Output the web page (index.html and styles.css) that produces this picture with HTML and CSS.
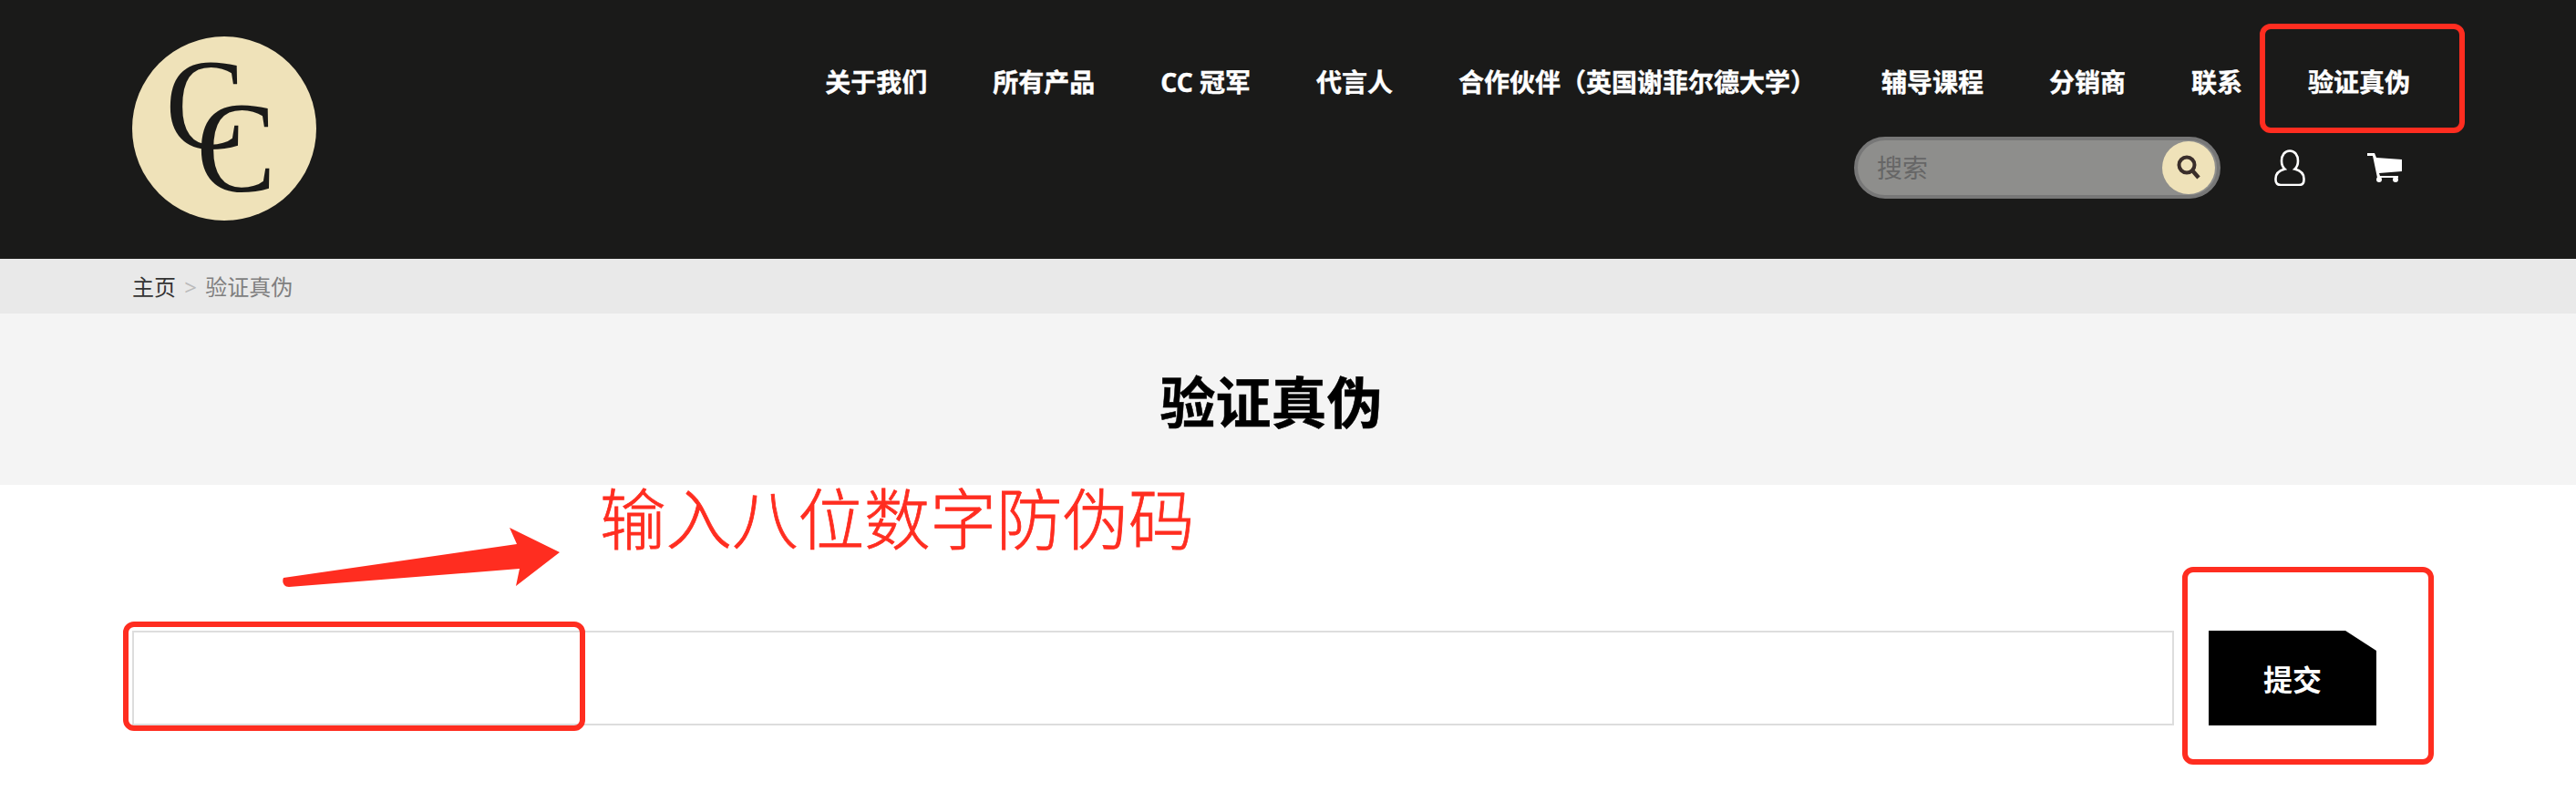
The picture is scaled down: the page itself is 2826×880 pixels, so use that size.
FILE: index.html
```html
<!DOCTYPE html>
<html lang="zh">
<head>
    <meta charset="UTF-8">
    <title>验证真伪</title>
    <link rel="stylesheet" href="styles.css">
</head>
<body>
    <header class="site_header">
        <a class="logo" href="#">
            <svg viewBox="0 0 202 202" width="202" height="202">
                <circle cx="101" cy="101" r="101" fill="#efe2b9"/>
                <text class="logo_c" transform="translate(36.500 123) scale(.92 1)">C</text>
                <text class="logo_c" transform="translate(70.500 170) scale(.92 1)">C</text>
            </svg>
        </a>
        <div class="header_right">
            <nav class="main_nav">
                <a href="#">关于我们</a>
                <a href="#">所有产品</a>
                <a href="#">CC 冠军</a>
                <a href="#">代言人</a>
                <a href="#">合作伙伴（英国谢菲尔德大学）</a>
                <a href="#">辅导课程</a>
                <a href="#">分销商</a>
                <a href="#">联系</a>
                <a href="#">验证真伪</a>
            </nav>
            <div class="tools">
                <div class="search">
                    <input type="text" placeholder="搜索">
                    <button class="search_btn">
                        <svg viewBox="0 0 30 30" width="30" height="30">
                            <circle cx="13" cy="12" r="8.500" fill="none" stroke="#3a2e2a" stroke-width="4"/>
                            <path d="M19 18l7 8" fill="none" stroke="#3a2e2a" stroke-width="4.500"/>
                        </svg>
                    </button>
                </div>
                <a class="user_icon" href="#">
                    <svg viewBox="0 0 34 40" width="34" height="40">
                        <path d="M11.500 21.500C9.200 19.500 8 16.500 8 12.500 8 6 11.500 1.500 17 1.500S26 6 26 12.500c0 4-1.200 7-3.500 9 5.800 1.500 10 5 10 10.500v1.500c0 3.300-2 5.500-5.500 5.500H7c-3.500 0-5.500-2.200-5.500-5.500V32c0-5.500 4.200-9 10-10.500z" fill="none" stroke="#fff" stroke-width="2.600"/>
                    </svg>
                </a>
                <a class="cart_icon" href="#">
                    <svg viewBox="0 0 38 32" width="38" height="32">
                        <path d="M0 0h8l2 5 28 2v13L13 22l1 3h20v2H11L6 3H0z" fill="#fff"/>
                        <circle cx="13" cy="29" r="3" fill="#fff"/>
                        <circle cx="31" cy="29" r="3" fill="#fff"/>
                    </svg>
                </a>
            </div>
        </div>
    </header>

    <div class="breadcrumb">
        <a href="#">主页</a> <span class="sep">&gt;</span> <span class="current">验证真伪</span>
    </div>

    <div class="title_band">
        <h1>验证真伪</h1>
    </div>

    <main class="verify_form">
        <input class="code_input" type="text">
        <button class="submit_btn">提交</button>
    </main>

    <!-- red marks drawn on top of the screenshot -->
    <div class="mark mark_nav"></div>
    <div class="mark mark_input"></div>
    <div class="mark mark_submit"></div>
    <p class="mark_text">输入八位数字防伪码</p>
    <svg class="mark_arrow" viewBox="0 0 320 80" width="320" height="80">
        <path d="M5 59L261 22 253 4 308 31 260 68 264 49 11 69C5 69 3 63 5 59z" fill="#ff2d20"/>
    </svg>
</body>
</html>
```

FILE: styles.css
```css
* {
    margin: 0;
    padding: 0;
    box-sizing: border-box;
}

html, body {
    height: 880px;
    overflow: hidden;
}

body {
    position: relative;
    background-color: #fff;
    font-family: "Noto Sans", "Noto Sans CJK SC", sans-serif;
}

a {
    color: inherit;
    text-decoration: none;
}

.site_header {
    display: flex;
    height: 284px;
    padding: 40px 0 0 145px;
    background-color: #1a1a19;
}

.logo {
    display: block;
    width: 202px;
    height: 202px;
}

.logo svg {
    overflow: visible;
}

.logo_c {
    font-family: "Liberation Serif", serif;
    font-size: 142px;
    fill: #1a1a19;
}

.header_right {
    flex: 1;
}

.main_nav {
    display: flex;
    justify-content: flex-end;
    gap: 72px;
    padding: 31px 182px 0 0;
    color: #fff;
    font-size: 28px;
    font-weight: 700;
    line-height: 38px;
    -webkit-text-stroke: 0.4px #fff;
}

.tools {
    display: flex;
    justify-content: flex-end;
    align-items: center;
    margin-top: 41px;
    padding-right: 191px;
}

.search {
    display: flex;
    align-items: center;
    justify-content: space-between;
    width: 402px;
    height: 68px;
    padding: 0 2px 0 21px;
    background-color: #8e8e8c;
    border: 4px solid #777;
    border-radius: 34px;
}

.search input {
    width: 200px;
    background: none;
    border: none;
    outline: none;
    font-family: inherit;
    font-size: 28px;
}

.search input::placeholder {
    color: #666;
}

.search_btn {
    display: flex;
    align-items: center;
    justify-content: center;
    width: 58px;
    height: 58px;
    background-color: #efe2b9;
    border: none;
    border-radius: 50%;
}

.user_icon, .cart_icon {
    display: block;
    line-height: 0;
}

.user_icon {
    margin-left: 59px;
}

.cart_icon {
    margin-left: 68px;
}

.breadcrumb {
    height: 60px;
    padding-left: 145px;
    background-color: #e9e9e9;
    color: #333;
    font-size: 24px;
    line-height: 62px;
}

.sep {
    margin: 0 3px;
    color: #bbb;
}

.current {
    color: #807f7f;
}

.title_band {
    height: 188px;
    padding: 0 182px 0 145px;
    background-color: #f4f4f4;
    text-align: center;
}

.title_band h1 {
    height: 188px;
    color: #000;
    font-size: 61px;
    font-weight: 700;
    line-height: 195px;
    -webkit-text-stroke: 0.5px #000;
}

.verify_form {
    display: flex;
    gap: 38px;
    padding: 160px 219px 0 145px;
}

.code_input {
    flex: 1;
    height: 104px;
    background-color: #fff;
    border: 2px solid #ddd;
    outline: none;
}

.submit_btn {
    width: 184px;
    height: 104px;
    background-color: #000;
    border: none;
    color: #fff;
    font-family: inherit;
    font-size: 32px;
    font-weight: 700;
    clip-path: polygon(0 0, 150px 0, 100% 22px, 100% 100%, 0 100%);
}

.mark {
    position: absolute;
    border: 6px solid #ff2d20;
    border-radius: 12px;
}

.mark_nav {
    left: 2479px;
    top: 26px;
    width: 225px;
    height: 120px;
}

.mark_input {
    left: 135px;
    top: 682px;
    width: 507px;
    height: 120px;
}

.mark_submit {
    left: 2394px;
    top: 622px;
    width: 276px;
    height: 217px;
}

.mark_text {
    position: absolute;
    left: 658px;
    top: 519px;
    color: #ff2d20;
    font-size: 72.500px;
    font-weight: 300;
    line-height: 100px;
    white-space: nowrap;
    -webkit-text-stroke: 0.8px #ff2d20;
}

.mark_arrow {
    position: absolute;
    left: 306px;
    top: 575px;
}
```
